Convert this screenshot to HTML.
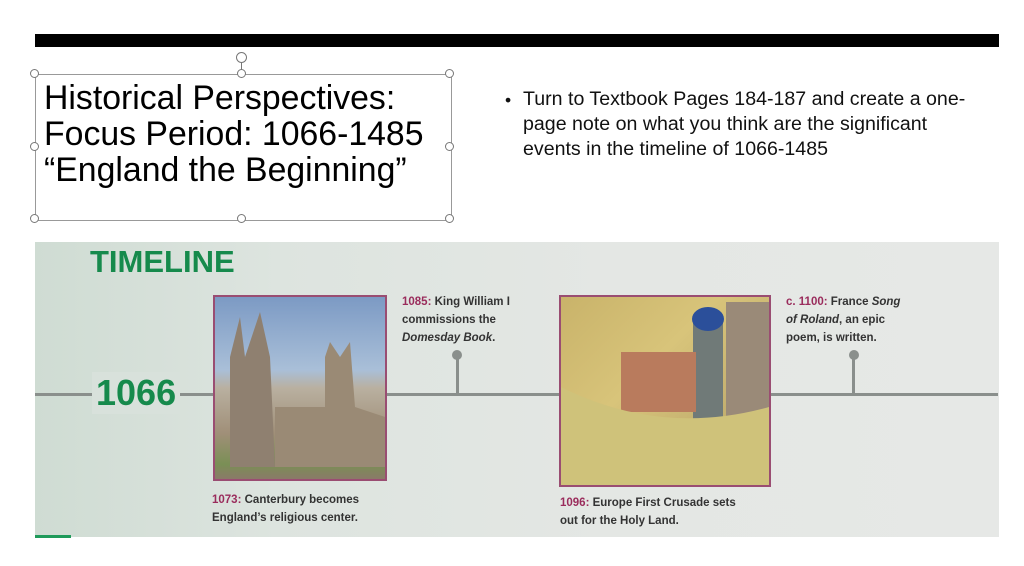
<!DOCTYPE html>
<html><head><meta charset="utf-8"><style>
body{margin:0;width:1024px;height:566px;background:#fff;position:relative;overflow:hidden;font-family:"Liberation Sans",sans-serif}
.a{position:absolute}
.h{width:7px;height:7px;border:1px solid #777;border-radius:50%;background:#fff;position:absolute}
.s{font-size:11.5px;font-weight:bold;color:#333;line-height:18px;white-space:nowrap}
.m{color:#9a2c5c}
</style></head><body>
<div class="a" style="left:35px;top:34px;width:964px;height:13px;background:#000"></div>
<div class="a" style="left:35px;top:74px;width:415px;height:145px;border:1px solid #999"></div>
<div class="h" style="left:30px;top:69px"></div><div class="h" style="left:237px;top:69px"></div><div class="h" style="left:445px;top:69px"></div>
<div class="h" style="left:30px;top:142px"></div><div class="h" style="left:445px;top:142px"></div>
<div class="h" style="left:30px;top:214px"></div><div class="h" style="left:237px;top:214px"></div><div class="h" style="left:445px;top:214px"></div>
<div class="a" style="left:236px;top:52px;width:9px;height:9px;border:1px solid #777;border-radius:50%"></div>
<div class="a" style="left:241px;top:62px;width:1px;height:8px;background:#777"></div>
<div class="a" style="left:44px;top:80px;font-size:33.8px;line-height:36px;color:#000;white-space:nowrap">Historical Perspectives:<br>Focus Period: 1066-1485<br>“England the Beginning”</div>
<div class="a" style="left:505px;top:88px;font-size:17.5px;line-height:25px;color:#111">•</div>
<div class="a" style="left:523px;top:87px;font-size:19.6px;line-height:25px;color:#111;white-space:nowrap">Turn to Textbook Pages 184-187 and create a one-<br>page note on what you think are the significant<br>events in the timeline of 1066-1485</div>

<div class="a" style="left:35px;top:242px;width:964px;height:295px;background:linear-gradient(90deg,#cfdcd3 0%,#dde4df 25%,#e4e7e4 60%,#e6e8e6 100%)"></div>
<div class="a" style="left:35px;top:535px;width:36px;height:3px;background:#1f9a5a"></div>
<div class="a" style="left:90px;top:244px;font-size:31px;font-weight:bold;color:#168a4c">TIMELINE</div>
<div class="a" style="left:35px;top:393px;width:963px;height:3px;background:#8a8f8c"></div>
<div class="a" style="left:92px;top:372px;padding:0 4px;background:#d8e1db;font-size:36px;font-weight:bold;color:#168a4c">1066</div>
<div class="a" style="left:456px;top:352px;width:3px;height:42px;background:#8a8f8c"></div>
<div class="a" style="left:452px;top:350px;width:10px;height:10px;border-radius:50%;background:#8a8f8c"></div>
<div class="a" style="left:852px;top:352px;width:3px;height:42px;background:#8a8f8c"></div>
<div class="a" style="left:849px;top:350px;width:10px;height:10px;border-radius:50%;background:#8a8f8c"></div>
<div class="a" style="left:213px;top:295px;width:170px;height:182px;border:2px solid #9a4d72;background:linear-gradient(#7c9ac4 0%,#a9bfd8 40%,#b9b0a0 50%,#a08f78 75%,#7a8f55 92%,#8a7a68 100%)">
<svg width="170" height="182"><path d="M15 170 L15 60 L25 20 L30 60 L45 15 L55 60 L60 170Z" fill="#8f8070"/><path d="M60 170 L60 110 L110 110 L110 60 L115 45 L125 60 L135 45 L140 110 L170 120 L170 170Z" fill="#9a8a75"/></svg></div>
<div class="a" style="left:559px;top:295px;width:208px;height:188px;border:2px solid #9a4d72;background:linear-gradient(135deg,#c9b36a 0%,#d8c47a 40%,#c4b070 70%,#b8a45e 100%)">
<svg width="208" height="188"><rect x="132" y="20" width="30" height="120" fill="#707a78"/><ellipse cx="147" cy="22" rx="16" ry="12" fill="#2b4f9a"/><rect x="60" y="55" width="75" height="60" fill="#b97b5d"/><rect x="165" y="5" width="43" height="150" fill="#9a8a78"/><path d="M0 90 Q100 140 208 110 L208 188 L0 188Z" fill="#cfc27a"/></svg></div>
<div class="a s" style="left:402px;top:293px">
<span class="m">1085:</span> King William I<br>commissions the<br><i>Domesday Book</i>.</div>
<div class="a s" style="left:786px;top:293px">
<span class="m">c. 1100:</span> France <i>Song</i><br><i>of Roland</i>, an epic<br>poem, is written.</div>
<div class="a s" style="left:212px;top:491px">
<span class="m">1073:</span> Canterbury becomes<br>England’s religious center.</div>
<div class="a s" style="left:560px;top:494px">
<span class="m">1096:</span> Europe First Crusade sets<br>out for the Holy Land.</div>
</body></html>
